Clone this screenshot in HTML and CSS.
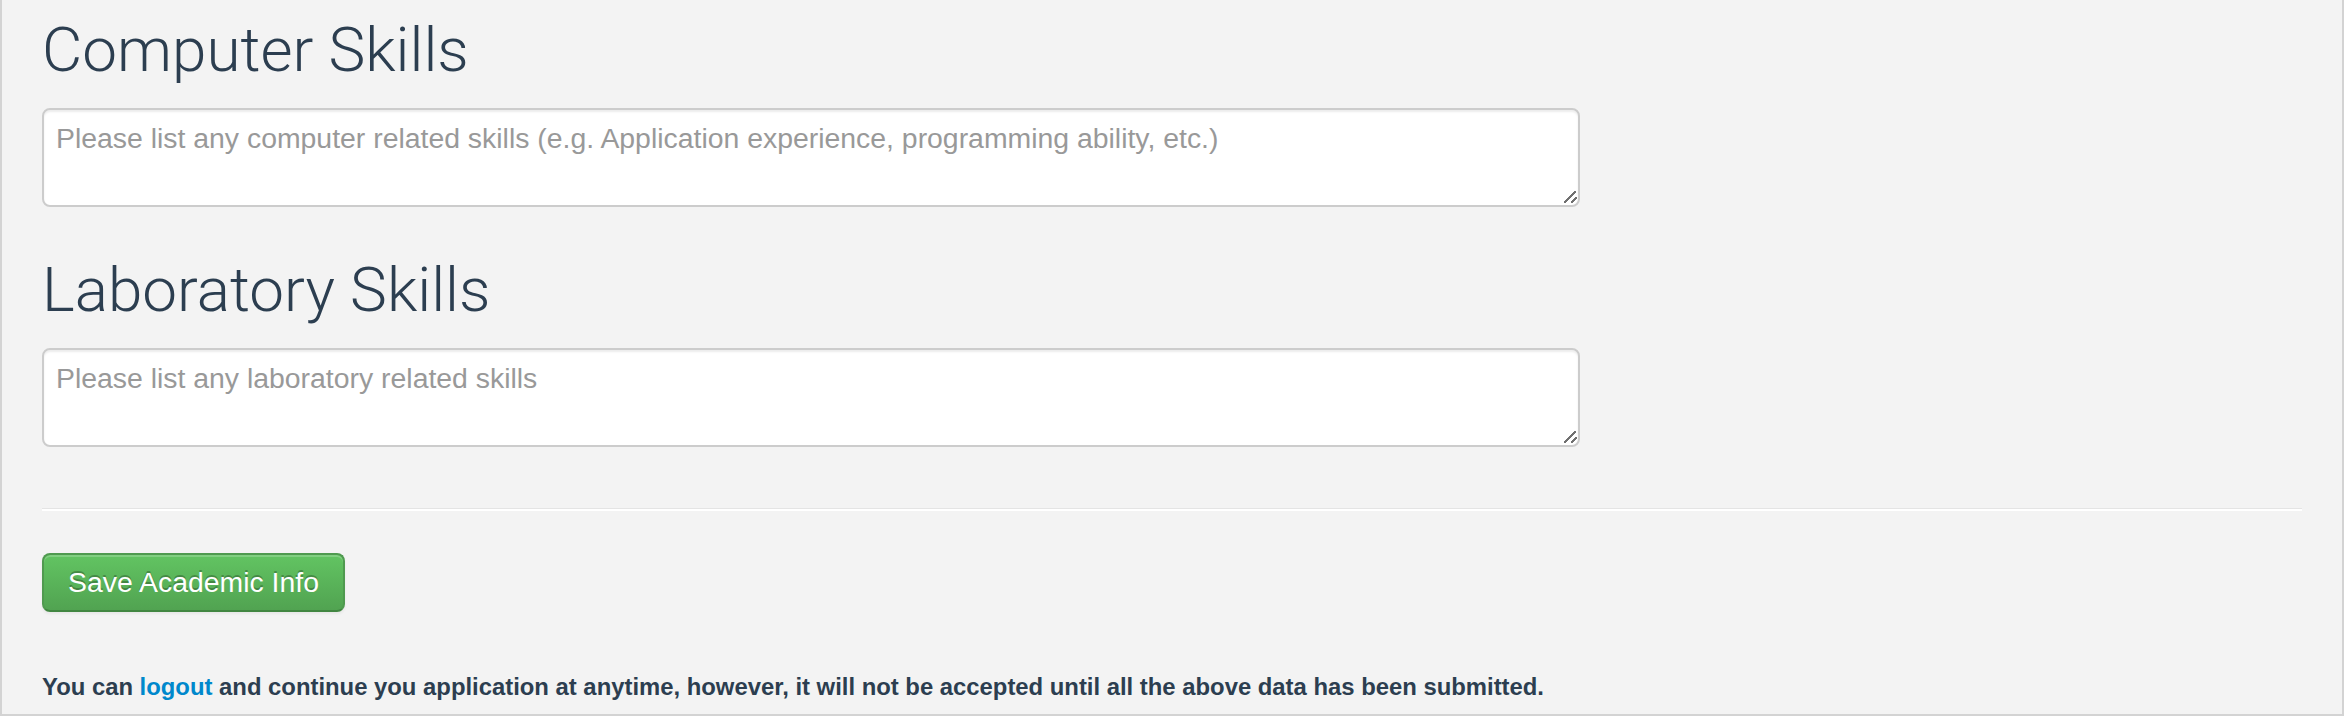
FILE: index.html
```html
<!DOCTYPE html>
<html lang="en">
<head>
<meta charset="utf-8">
<title>Academic Info</title>
<link rel="stylesheet" href="styles.css">
</head>
<body>
<div class="page">
  <form class="form">
    <h2 class="section-title">Computer Skills</h2>
    <textarea class="field field-first" placeholder="Please list any computer related skills (e.g. Application experience, programming ability, etc.)"></textarea>
    <h2 class="section-title">Laboratory Skills</h2>
    <textarea class="field" placeholder="Please list any laboratory related skills"></textarea>
    <hr class="divider">
    <button type="button" class="btn-success">Save Academic Info</button>
  </form>
  <p class="note">You can <a href="#" class="link">logout</a> and continue you application at anytime, however, it will not be accepted until all the above data has been submitted.</p>
</div>
</body>
</html>
```
FILE: styles.css
```css
html, body {
  margin: 0;
  padding: 0;
}
body {
  background: #f3f3f3;
  font-family: "Liberation Sans", Arial, sans-serif;
  color: #2c3e50;
}
.page {
  box-sizing: border-box;
  width: 2344px;
  height: 716px;
  padding: 19px 40px 0 40px;
  border-left: 2px solid #d3d3d3;
  border-right: 2px solid #d3d3d3;
  border-bottom: 2px solid #d3d3d3;
  background: #f3f3f3;
  overflow: hidden;
}
.form {
  display: flex;
  flex-direction: column;
  align-items: flex-start;
}
.section-title {
  margin: 0 0 28px 0;
  font-family: Roboto, "Liberation Sans", sans-serif;
  font-weight: 300;
  font-size: 62px;
  line-height: 61px;
  color: #2c3e50;
}
.field {
  box-sizing: border-box;
  width: 1538px;
  height: 99px;
  margin: 0;
  padding: 8px 12px;
  border: 2px solid #cccccc;
  border-radius: 8px;
  background-color: #ffffff;
  background-image:
    linear-gradient(135deg, transparent 44%, #707070 44%, #707070 56%, transparent 56%),
    linear-gradient(135deg, transparent 38%, #707070 38%, #707070 62%, transparent 62%);
  background-size: 12px 12px, 6px 6px;
  background-position: right 2px bottom 2px, right 1px bottom 2px;
  background-repeat: no-repeat;
  box-shadow: inset 0 2px 2px rgba(0, 0, 0, 0.075);
  font-family: "Liberation Sans", Arial, sans-serif;
  font-size: 28.4px;
  line-height: 40px;
  color: #555555;
  resize: none;
}
.field::placeholder {
  color: #999999;
}
.field-first {
  margin-bottom: 52px;
}
.divider {
  align-self: stretch;
  margin: 61px 0 42px 0;
  height: 0;
  border: 0;
  border-top: 1px solid #e4e4e4;
  border-bottom: 2px solid #ffffff;
}
.btn-success {
  box-sizing: border-box;
  height: 59px;
  padding: 8px 24px;
  border: 2px solid #4f9a4f;
  border-bottom-color: #418641;
  border-radius: 8px;
  background: linear-gradient(to bottom, #62c462, #51a351);
  box-shadow: inset 0 2px 0 rgba(255, 255, 255, 0.2), 0 2px 3px rgba(0, 0, 0, 0.05);
  color: #ffffff;
  font-family: "Liberation Sans", Arial, sans-serif;
  font-size: 28.4px;
  line-height: 39px;
  text-shadow: 0 -2px 0 rgba(0, 0, 0, 0.25);
  cursor: pointer;
}
.note {
  margin: 57px 0 0 0;
  font-size: 23.85px;
  line-height: 36px;
  font-weight: bold;
  color: #2c3e50;
}
.link {
  color: #0088cc;
  text-decoration: none;
}
```
